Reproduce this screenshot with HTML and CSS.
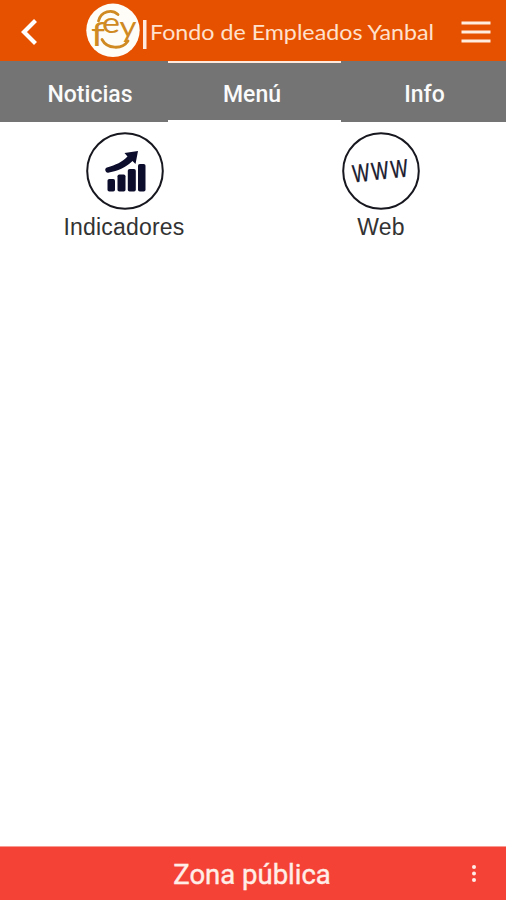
FILE: index.html
```html
<!DOCTYPE html>
<html lang="es">
<head>
<meta charset="utf-8">
<title>Fondo de Empleados Yanbal</title>
<link rel="stylesheet" href="styles.css">
</head>
<body>
<div class="app">
  <header class="topbar">
    <svg class="back" width="20" height="28" viewBox="0 0 20 28"><path d="M17.500 2.500L6 14L17.500 25.500"/></svg>
    <svg class="brand" width="352" height="61" viewBox="85 0 352 61">
      <circle class="disc" cx="113" cy="30.300" r="26.700"/>
      <g class="mark">
        <text class="f" x="91" y="45.500" textLength="14" lengthAdjust="spacingAndGlyphs">f</text>
        <text x="102" y="32.500" textLength="18" lengthAdjust="spacingAndGlyphs">e</text>
        <text class="y" x="119.500" y="37" textLength="17" lengthAdjust="spacingAndGlyphs">y</text>
        <path d="M98.500 21C101 11 112 9 118 14.500M102 39.500C107 49 122 50 128 41"/>
      </g>
      <rect class="rule" x="143" y="20" width="3.500" height="29"/>
      <text class="name" x="150" y="40" textLength="284" lengthAdjust="spacingAndGlyphs">Fondo de Empleados Yanbal</text>
    </svg>
    <svg class="burger" width="30" height="22" viewBox="0 0 30 22"><path d="M0.500 2H29.500M0.500 11H29.500M0.500 20H29.500"/></svg>
  </header>
  <nav class="tabs">
    <span class="tab tab-news">Noticias</span>
    <span class="tab active">Menú</span>
    <span class="tab tab-info">Info</span>
  </nav>
  <main class="grid">
    <div class="item">
      <svg width="80" height="80" viewBox="0 0 80 80">
        <circle class="ring" cx="40" cy="40" r="37.800"/>
        <g class="bars">
          <rect x="22.500" y="48" width="7.500" height="12.500" rx="1.800"/>
          <rect x="32.500" y="43.500" width="8" height="17" rx="1.800"/>
          <rect x="42.800" y="38" width="8" height="22.500" rx="1.800"/>
          <rect x="53" y="33" width="7.500" height="27.500" rx="1.800"/>
          <path d="M39.500 22L53 20L50.500 33L47.500 30C40 37 33 40 24 41.500A2.500 2.500 0 0 1 22 36.500C31 34 37 31 42.500 25.500Z"/>
        </g>
      </svg>
      <span class="label">Indicadores</span>
    </div>
    <div class="item">
      <svg width="80" height="80" viewBox="0 0 80 80">
        <circle class="ring" cx="40" cy="40" r="37.800"/>
        <text class="www" transform="translate(12.500 51.500) rotate(-6.500) scale(.72 1)" textLength="77" lengthAdjust="spacing">WWW</text>
      </svg>
      <span class="label web">Web</span>
    </div>
  </main>
  <footer class="bottombar">
    <span class="zone">Zona pública</span>
    <svg class="more" width="6" height="20" viewBox="0 0 6 20"><circle cx="3" cy="3" r="2"/><circle cx="3" cy="9.500" r="2"/><circle cx="3" cy="16" r="2"/></svg>
  </footer>
</div>
</body>
</html>
```
FILE: styles.css
```css
* { box-sizing: border-box; }
body { margin: 0; background: #fff; }
.app { width: 506px; height: 900px; display: flex; flex-direction: column; overflow: hidden; }
.topbar { height: 61px; flex: none; display: flex; align-items: center; background: #e65100; padding: 0 15px 0 18px; }
.topbar svg { flex: none; }
.back { margin-top: 3px; }
.back path { fill: none; stroke: #fff; stroke-width: 4.2; }
.brand { margin-left: 47px; }
.disc { fill: #fffdf8; }
.mark text { font: 29px "Lato", sans-serif; fill: #d08a22; }
.mark .f { font-size: 33px; }
.mark path { fill: none; stroke: #d08a22; stroke-width: 2.8; stroke-linecap: round; }
.rule { fill: #ffeadd; }
.name { font: 20.5px "Lato", sans-serif; fill: #ffe1cd; }
.burger { margin: 3px 0 0 auto; }
.burger path { stroke: #ffede0; stroke-width: 3; }
.tabs { height: 61px; flex: none; display: grid; grid-template-columns: 168px 173px 165px; background: #747474; }
.tab { display: flex; align-items: center; justify-content: center; padding-top: 6px; color: #fafafa; font: 500 23px "Roboto", sans-serif; }
.tab-news { padding-left: 12px; }
.tab-info { padding-left: 2px; }
.active { border-top: 2px solid #ffe9dc; border-bottom: 2px solid #fff; padding-right: 5px; }
.grid { flex: 1; display: grid; grid-template-columns: 250px 256px; align-content: start; padding-top: 9px; }
.item { display: flex; flex-direction: column; align-items: center; }
.item:nth-child(2) { padding-left: 6px; }
.ring { fill: none; stroke: #17171f; stroke-width: 2; }
.bars { fill: #0c0c2c; }
.www { font: 25px "Liberation Sans", sans-serif; fill: #17172c; stroke: #17172c; stroke-width: .4px; }
.label { margin: 2px 2px 0 0; font: 23px/29px "Liberation Sans", sans-serif; letter-spacing: .2px; color: #333; }
.web { margin-right: 0; }
.bottombar { height: 54px; flex: none; display: flex; align-items: center; justify-content: center; position: relative; background: #f44336; border-top: 1px solid #f99a92; }
.zone { font: 27.5px "Roboto", sans-serif; color: #ffede8; padding: 1px 2px 0 0; -webkit-text-stroke: .4px #ffede8; }
.more { position: absolute; right: 29px; top: 17px; fill: #ffede8; }
```
